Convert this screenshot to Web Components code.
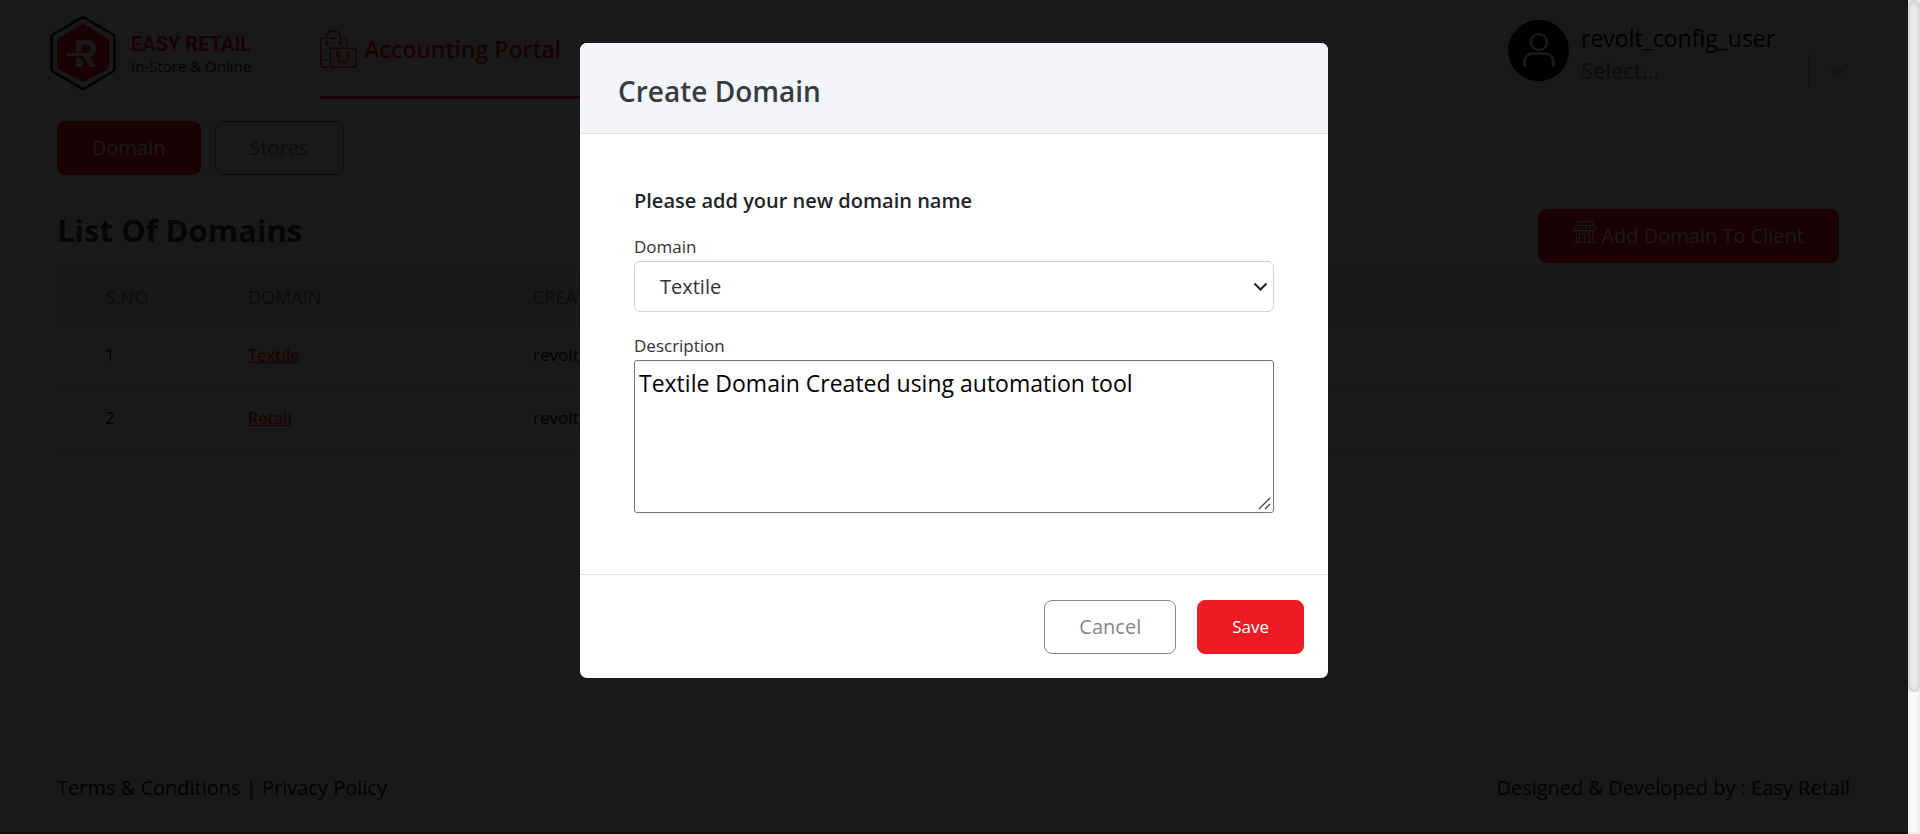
<!DOCTYPE html>
<html lang="en">
<head>
<meta charset="utf-8">
<title>Easy Retail - Domains</title>
<style>
  :root { --red: #ed1c24; --grey: #868686; --line: #dee2e6; --panel: #f8f8f8; }
  body { margin: 0; font-family: "Open Sans", "Noto Sans", sans-serif; color: #212529; background: #fff; }
</style>
</head>
<body>
<er-app></er-app>
<script>
const define = (name, html) => {
  const template = document.createElement('template');
  template.innerHTML = '<style>*{box-sizing:border-box}</style>' + html;
  customElements.define(name, class extends HTMLElement {
    constructor() {
      super();
      this.attachShadow({ mode: 'open' }).append(template.content.cloneNode(true));
    }
  });
};

define('er-button', `
<style>
  :host { display: inline-flex; }
  button { display: flex; align-items: center; gap: 5px; height: 54px; padding: 0 34px; font: inherit; font-size: 20px;
    line-height: 28px; border: 1px solid var(--grey); border-radius: 8px; background: #fff; color: var(--grey); white-space: nowrap; }
  :host([primary]) button { background: var(--red); border-color: var(--red); color: #fff; }
  :host([small]) button { font-size: 17px; }
  ::slotted(svg) { margin-bottom: 9px; }
</style>
<button type="button"><slot name="icon"></slot><slot></slot></button>`);

define('er-logo', `
<style>
  :host { display: flex; gap: 15px; padding-top: 15px; }
  .words { padding-top: 17px; }
  .name { font: 700 20px/24px Roboto, sans-serif; color: var(--red); }
  .tag { font-size: 15px; line-height: 20px; color: #222; }
</style>
<svg width="66" height="76" viewBox="0 0 66 76" fill="none" aria-hidden="true">
  <path d="M31 3 Q33 1.500 35 3 L63 19.500 Q64.500 20.500 64.500 22 V54 Q64.500 55.500 63 56.500 L35 73 Q33 74.500 31 73 L3 56.500 Q1.500 55.500 1.500 54 V22 Q1.500 20.500 3 19.500 Z" stroke="#222" stroke-width="2.600"/>
  <path d="M29 11 Q33 7.500 37 11 L56 22 Q59 24 59 27 V50 Q59 53 56 55 L37 65 Q33 68 29 65 L10 55 Q7 53 7 50 V27 Q7 24 10 22 Z" fill="#ed1c24"/>
  <path d="M26 37 V25 H36 C43 25 46 28 46 33.500 C46 38 43 41 39.500 41.500 L46 52 H40 L33 41 H17 V38 H36 C39 38 41 36.500 41 33.500 C41 31 39 29.500 36 29.500 H31 V37 Z M26 43 H31 L33 47 V52 H26 Z" fill="#fff"/>
</svg>
<div class="words"><div class="name">EASY RETAIL</div><div class="tag">In-Store &amp; Online</div></div>`);

define('er-account', `
<style>
  :host { display: flex; gap: 12px; padding-top: 20px; }
  .who { width: 270px; padding-top: 3px; }
  .name { font-size: 23px; line-height: 30px; color: #000; }
  .pick { display: flex; align-items: center; height: 34px; }
  select { appearance: none; flex: 1; height: 34px; padding: 0; border: 0; background: none; font: inherit; font-size: 22px; color: #777; }
  .bar { width: 2px; height: 34px; margin-right: 16px; background: #ccc; }
</style>
<svg width="61" height="61" viewBox="0 0 61 61" fill="none" aria-hidden="true">
  <circle cx="30.500" cy="30.500" r="30.500" fill="#000"/>
  <g stroke="#fff" stroke-width="2.600"><circle cx="31" cy="22" r="8"/><path d="M16.500 47 V43 Q16.500 33.500 26 33.500 H36 Q45.500 33.500 45.500 43 V47"/></g>
</svg>
<div class="who">
  <div class="name">revolt_config_user</div>
  <div class="pick">
    <select aria-label="Client"><option>Select...</option></select>
    <span class="bar"></span>
    <svg width="25" height="24" viewBox="0 0 25 24" fill="none" aria-hidden="true"><path d="M4 8 L12 16 L20 8" stroke="#ccc" stroke-width="2.500"/></svg>
  </div>
</div>`);

define('er-header', `
<style>
  :host { display: flex; height: 101px; padding: 0 57px 0 50px; background: #fff; }
  nav { flex: 1; margin-left: 69px; }
  a { display: inline-flex; align-items: center; gap: 7px; height: 99px; padding: 2px 22px 0 0; border-bottom: 3px solid var(--red);
    font-size: 23px; font-weight: 600; color: var(--red); text-decoration: none; }
</style>
<er-logo></er-logo>
<nav><a href="#accounting">
  <svg width="37" height="38" viewBox="0 0 37 38" fill="none" stroke="#ed1c24" stroke-width="1.400" aria-hidden="true">
    <path d="M4.500 8.200 H.8 V34 Q.8 37.200 4 37.200 H8 M.8 30 H8 M10 8.200 H17 M23 8.200 H26.500 V16"/>
    <path d="M6.500 12 V8 Q6.500 1 13.500 1 Q20.500 1 20.500 8 V12"/><circle cx="6.500" cy="13.500" r="1.500"/><circle cx="20.500" cy="13.500" r="1.500"/>
    <path d="M13 18.200 H36.200 V34.500 Q36.200 37.200 33.500 37.200 H13 Q10.300 37.200 10.300 34.500 V18.200 Z" fill="#ed1c24" fill-opacity=".15"/>
    <circle cx="18" cy="23.500" r="1.500"/><circle cx="28.500" cy="23.500" r="1.500"/>
    <path d="M18 25 V27 Q18 32.200 23.250 32.200 Q28.500 32.200 28.500 27 V25"/>
  </svg><span>Accounting Portal</span></a></nav>
<er-account></er-account>`);

define('er-tabs', `
<style>
  :host { display: flex; gap: 14px; padding: 20px 57px 17px; background: var(--panel); }
</style>
<slot></slot>`);

define('er-domain-list', `
<style>
  :host { display: block; flex: 1; padding: 17px 69px 0 57px; }
  .top { display: flex; justify-content: space-between; align-items: flex-start; margin-bottom: 6px; }
  h1 { margin: 0; font-size: 31px; line-height: 42px; font-weight: 700; color: #3b3f47; }
  table { width: 100%; table-layout: fixed; border-collapse: separate; border-spacing: 0; font-size: 17px; line-height: 24px; text-align: left; }
  th, td { padding: 0; white-space: nowrap; border-bottom: 1px solid #e6e6e6; }
  th { height: 59px; padding-bottom: 3px; font-size: 18px; font-weight: 400; color: #777; background: #f4f4f4; border-top: 1px solid #e6e6e6; }
  td { height: 63px; padding-bottom: 9px; color: #111; }
  th:first-child, td:first-child { padding-left: 48px; }
  th:first-child { width: 191px; border-left: 1px solid #e6e6e6; border-radius: 10px 0 0 10px; }
  th:nth-child(2) { width: 16%; }
  th:last-child { border-right: 1px solid #e6e6e6; border-radius: 0 10px 10px 0; }
  a { color: var(--red); font-size: 16px; font-weight: 600; }
</style>
<div class="top">
  <h1>List Of Domains</h1>
  <er-button primary>
    <svg slot="icon" width="23" height="22" viewBox="0 0 23 22" fill="none" stroke="#fff" aria-hidden="true">
      <path d="M3.500 5 V.5 H19.500 V5 M2.500 4.500 H20.500 L22.500 9.500 H.5 Z M6.500 4.500 L5 9.500 M10 4.500 L9.500 9.500 M13 4.500 L13.500 9.500 M16.500 4.500 L18 9.500"/>
      <path d="M.5 9.500 Q2.700 13 5 9.500 Q7.200 13 9.500 9.500 Q11.500 13 13.500 9.500 Q15.700 13 18 9.500 Q20.200 13 22.500 9.500"/>
      <path d="M3.500 12 V21.500 M19.500 12 V21.500 M0 21.500 H23 M6.500 21 V12.500 H16.500 V21 M11.500 13 V21 M9.500 17 H13.500"/>
    </svg>Add Domain To Client</er-button>
</div>
<table>
  <thead><tr><th scope="col">S.NO</th><th scope="col">DOMAIN</th><th scope="col">CREATED</th></tr></thead>
  <tbody>
    <tr><td>1</td><td><a href="#textile">Textile</a></td><td>revolt_</td></tr>
    <tr><td>2</td><td><a href="#retail">Retail</a></td><td>revolt_</td></tr>
  </tbody>
</table>`);

define('er-footer', `
<style>
  :host { display: flex; justify-content: space-between; align-items: center; height: 90px; padding: 0 58px 0 57px;
    background: var(--panel); border-bottom: 2px solid #999; font-size: 20px; line-height: 28px; color: #222; }
  a { color: inherit; text-decoration: none; }
</style>
<div><a href="#terms">Terms &amp; Conditions</a> | <a href="#privacy">Privacy Policy</a></div>
<div>Designed &amp; Developed by : Easy Retail</div>`);

define('er-dialog', `
<style>
  :host { position: absolute; inset: 0; display: flex; justify-content: center; align-items: flex-start; padding-top: 43px; background: rgba(0, 0, 0, .9); }
  section { width: 748px; max-width: 100%; overflow: hidden; border-radius: 7px; background: #fff; }
  h2 { margin: 0; padding: 27px 38px 21px; font-size: 28px; line-height: 42px; font-weight: 600; color: #363d41; background: #f4f5fa; border-bottom: 1px solid var(--line); }
  .body { padding: 53px 54px 61px; }
  footer { display: flex; justify-content: flex-end; gap: 21px; padding: 25px 24px 24px; border-top: 1px solid var(--line); }
</style>
<section role="dialog" aria-modal="true" aria-labelledby="title">
  <h2 id="title"><slot name="title"></slot></h2>
  <div class="body"><slot></slot></div>
  <footer><slot name="actions"></slot></footer>
</section>`);

define('er-domain-form', `
<style>
  :host { display: block; }
  h3 { margin: 0 0 20px; font-size: 20px; line-height: 28px; font-weight: 600; color: #212529; }
  label { display: block; margin-bottom: 2px; font-size: 17px; line-height: 24px; color: #333; }
  .field { display: grid; }
  .field > * { grid-area: 1 / 1; }
  .field svg { place-self: center end; margin-right: 6px; pointer-events: none; }
  .field .grip { place-self: end; margin: 0 3px 3px 0; }
  select, textarea { display: block; width: 100%; font: inherit; background-color: #fff; }
  select { appearance: none; height: 51px; padding: 0 0 0 25px; font-size: 20px; color: #333; border: 1px solid #ced4da; border-radius: 6px; }
  textarea { height: 153px; padding: 4px; resize: none; font-size: 23px; line-height: 36px; color: #000; border: 1px solid #767676; border-radius: 3px; }
  .choice { margin-bottom: 22px; }
</style>
<h3>Please add your new domain name</h3>
<label for="domain">Domain</label>
<div class="field choice">
  <select id="domain"><option>Textile</option><option>Retail</option></select>
  <svg width="15" height="10" viewBox="0 0 15 10" fill="none" aria-hidden="true"><path d="M1.500 1.500 L7.500 7.500 L13.500 1.500" stroke="#222" stroke-width="2"/></svg>
</div>
<label for="description">Description</label>
<div class="field">
  <textarea id="description">Textile Domain Created using automation tool</textarea>
  <svg class="grip" width="13" height="13" viewBox="0 0 13 13" fill="none" aria-hidden="true"><path d="M1 12 L12 1 M7 12 L12 7" stroke="#444" stroke-width="1.300"/></svg>
</div>`);

define('er-scrollbar', `
<style>
  :host { display: block; background: #fafafa; box-shadow: inset 0 0 4px #ddd; }
  div { height: 83%; border-radius: 6px; background: #efefef; box-shadow: inset 0 0 6px #bbb; }
</style>
<div></div>`);

define('er-app', `
<style>
  :host { display: grid; grid-template-columns: minmax(0, 1fr) 12px; min-height: 100vh; }
  .page { position: relative; display: flex; flex-direction: column; }
</style>
<div class="page">
  <er-header></er-header>
  <er-tabs><er-button primary>Domain</er-button><er-button>Stores</er-button></er-tabs>
  <er-domain-list></er-domain-list>
  <er-footer></er-footer>
  <er-dialog>
    <span slot="title">Create Domain</span>
    <er-domain-form></er-domain-form>
    <er-button slot="actions">Cancel</er-button>
    <er-button slot="actions" primary small>Save</er-button>
  </er-dialog>
</div>
<er-scrollbar></er-scrollbar>`);
</script>
</body>
</html>
